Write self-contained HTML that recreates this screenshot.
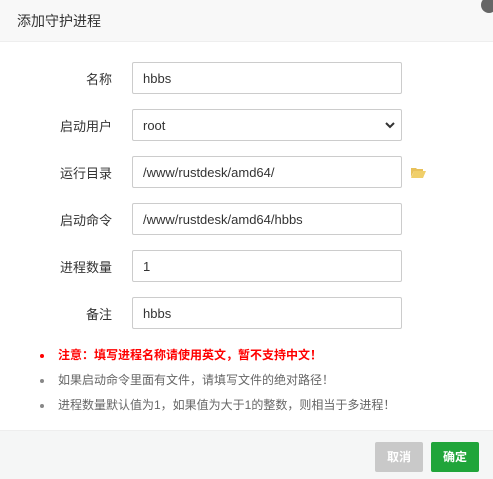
<!DOCTYPE html>
<html><head><meta charset="utf-8"><style>
*{margin:0;padding:0;box-sizing:border-box}
body{width:493px;height:479px;background:#fff;font-family:"Liberation Sans","Noto Sans CJK SC",sans-serif;position:relative;overflow:hidden;color:#333}
.hd{position:absolute;left:0;top:0;width:493px;height:42px;background:#f8f8f8;border-bottom:1px solid #eee}
.hd span{position:absolute;left:17px;top:11px;font-size:14px;color:#333}
.close{position:absolute;left:481px;top:-3px;width:16px;height:16px;border-radius:50%;background:#666}
.lb{position:absolute;right:381px;font-size:13px;color:#333;text-align:right;line-height:30px;margin-top:3px}
.in{position:absolute;left:132px;width:270px;height:32px;border:1px solid #ccc;border-radius:2px;font-size:13px;color:#333;padding-left:10px;line-height:31px}
.n{position:absolute;left:58px;white-space:nowrap;font-size:12px}
.dot{position:absolute;left:40px;width:4px;height:4px;border-radius:50%}
.ft{position:absolute;left:0;top:430px;width:493px;height:49px;background:#f5f6f6;border-top:1px solid #eee}
.btn{position:absolute;top:442px;width:48px;height:30px;border-radius:2px;color:#fff;font-size:12px;font-weight:bold;text-align:center;line-height:30px}
</style></head><body>
<div class="hd"><span>添加守护进程</span></div>
<div class="close"></div>
<div class="lb" style="top:62px">名称</div>
<div class="in" style="top:62px">hbbs</div>
<div class="lb" style="top:109px">启动用户</div>
<div class="in" style="top:109px">root<svg style="position:absolute;right:6px;top:12px" width="10" height="7" viewBox="0 0 10 7"><path d="M1 1l4 4 4-4" stroke="#333" stroke-width="2" fill="none"/></svg></div>
<div class="lb" style="top:156px">运行目录</div>
<div class="in" style="top:156px">/www/rustdesk/amd64/</div>
<svg style="position:absolute;left:411px;top:167px" width="15" height="11" viewBox="0 0 15 11"><path d="M0 1h5l1 1h6v2H3L0 10z" fill="#e8c15a"/><path d="M3 4h12l-3 7H0z" fill="#f0cf6a"/></svg>
<div class="lb" style="top:203px">启动命令</div>
<div class="in" style="top:203px">/www/rustdesk/amd64/hbbs</div>
<div class="lb" style="top:250px">进程数量</div>
<div class="in" style="top:250px">1</div>
<div class="lb" style="top:297px">备注</div>
<div class="in" style="top:297px">hbbs</div>
<div class="dot" style="top:354px;background:#f00"></div>
<div class="n" style="top:346px;color:#f00;font-weight:bold">注意：填写进程名称请使用英文，暂不支持中文！</div>
<div class="dot" style="top:379px;background:#888"></div>
<div class="n" style="top:371px;color:#666">如果启动命令里面有文件，请填写文件的绝对路径！</div>
<div class="dot" style="top:404px;background:#888"></div>
<div class="n" style="top:396px;color:#666">进程数量默认值为1，如果值为大于1的整数，则相当于多进程！</div>
<div class="ft"></div>
<div class="btn" style="left:375px;background:#c9c9c9">取消</div>
<div class="btn" style="left:431px;background:#20a53a">确定</div>
</body></html>
